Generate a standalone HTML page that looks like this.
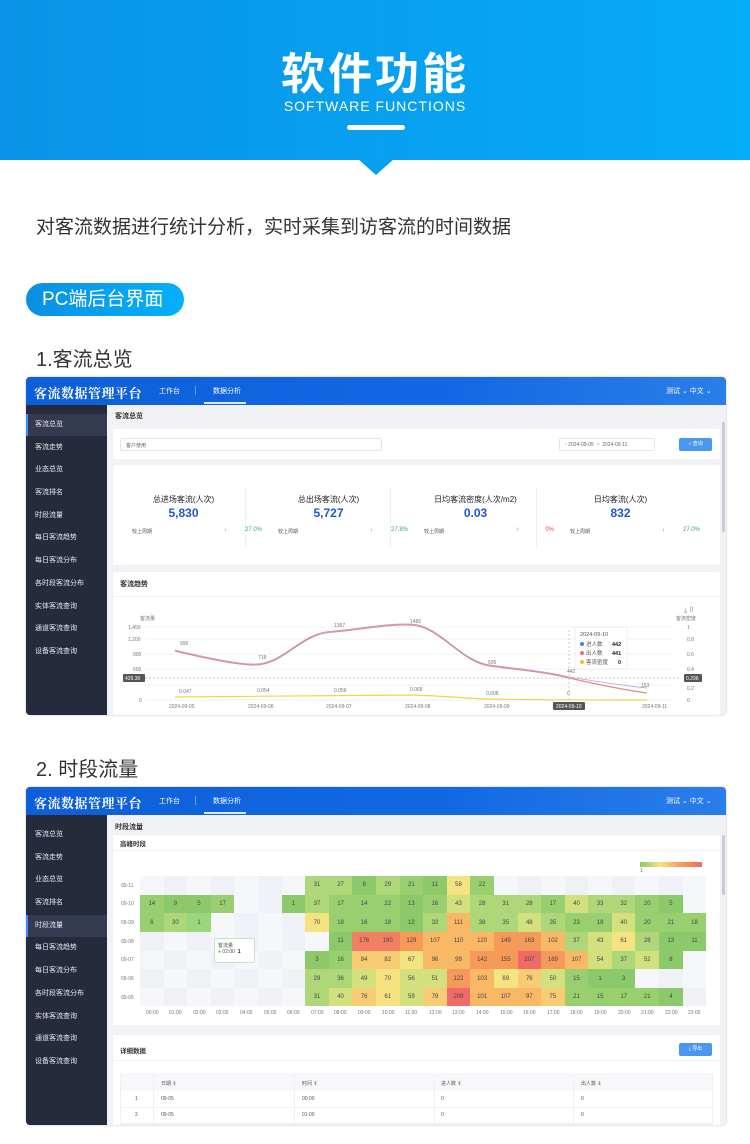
<!DOCTYPE html>
<html><head><meta charset="utf-8">
<style>
*{margin:0;padding:0;box-sizing:border-box}
body{width:750px;height:1144px;position:relative;background:#fff;font-family:"Liberation Sans","Noto Sans CJK SC",sans-serif;overflow:hidden}
.a{position:absolute}
.banner{left:0;top:0;width:750px;height:160px;background:linear-gradient(90deg,#0a93e6,#05acf8)}
.tri{left:358px;top:159px;width:0;height:0;border-left:18px solid transparent;border-right:18px solid transparent;border-top:16px solid #07a0ef}
.shot{border-radius:4px;overflow:hidden;background:#f0f2f5;box-shadow:0 0 2px rgba(0,0,0,.25)}
.hdr{left:0;top:0;width:700px;height:28px;background:linear-gradient(90deg,#0d5fd9,#1268e3 60%,#2a7eea)}
.logo{left:8px;top:6px;color:#fff;font:bold 13px "Noto Serif CJK SC",serif;letter-spacing:0.5px}
.nav{top:9px;color:#fff;font-size:7px}
.side{left:0;top:28px;width:81px;background:#252b3d}
.si{position:absolute;left:0;width:81px;height:22px;color:#e8eaf0;font-size:7px;line-height:22px;padding-left:9px}
.si.on{background:#343b50;border-left:2px solid #3d8bff;padding-left:7px}
.card{background:#fff;border-radius:2px}
.t7{font-size:7px;color:#333}
.cmp{font-size:5px;color:#555;top:151px}
.pct{font-size:6px;top:150px;width:40px;text-align:right}
.arr{font-size:6px;top:150px}
table.hm{border-collapse:collapse;table-layout:fixed;width:566.4px}
table.hm td{width:23.6px;height:18.65px;font-size:6px;color:#444;text-align:center;padding:0}
.e{background:#f6f7fb}.e2{background:#eff1f7}
.g0{background:#8cc96a}.g1{background:#9acf70}.g2{background:#aed779}.y1{background:#d3e07e}.y2{background:#f4e380}.y3{background:#f8cc74}.o1{background:#f8b866}.o2{background:#f69a59}.r1{background:#f27f62}.r2{background:#ef6b68}
</style></head><body>
<div class="a banner"></div>
<div class="a tri"></div>
<div class="a" style="left:0;top:38px;width:750px;text-align:center;color:#fff;font:bold 44px 'Noto Sans CJK SC',sans-serif;letter-spacing:3px">软件功能</div>
<div class="a" style="left:0;top:98px;width:750px;text-align:center;color:#fff;font-size:14px;letter-spacing:1px">SOFTWARE FUNCTIONS</div>
<div class="a" style="left:347px;top:125px;width:58px;height:5px;background:#fff;border-radius:3px"></div>

<div class="a" style="left:36px;top:212px;font-size:19px;color:#333">对客流数据进行统计分析，实时采集到访客流的时间数据</div>
<div class="a" style="left:26px;top:283px;width:158px;height:33px;border-radius:17px;background:linear-gradient(90deg,#0b8fe4,#05b0fb);color:#fff;font-size:19px;line-height:33px;padding-left:16px">PC端后台界面</div>
<div class="a" style="left:36px;top:343px;font-size:20px;color:#333">1.客流总览</div>
<div class="a" style="left:36px;top:753px;font-size:20px;color:#333">2. 时段流量</div>

<!-- SHOT 1 -->
<div class="a shot" style="left:26px;top:377px;width:700px;height:338px">
 <div class="a hdr"></div>
 <div class="a logo">客流数据管理平台</div>
 <div class="a nav" style="left:133px">工作台</div>
 <div class="a" style="left:169px;top:9px;width:1px;height:9px;background:#6c9ce8"></div>
 <div class="a nav" style="left:187px">数据分析</div>
 <div class="a" style="left:178px;top:25px;width:42px;height:2px;background:#dbe7ff"></div>
 <div class="a nav" style="left:640px">测试 ⌄ 中文 ⌄</div>
 <div class="a side" style="height:310px">
  <div class="si on" style="top:9px">客流总览</div>
  <div class="si" style="top:32px">客流走势</div>
  <div class="si" style="top:54px">业态总览</div>
  <div class="si" style="top:77px">客流排名</div>
  <div class="si" style="top:100px">时段流量</div>
  <div class="si" style="top:122px">每日客流趋势</div>
  <div class="si" style="top:145px">每日客流分布</div>
  <div class="si" style="top:168px">各时段客流分布</div>
  <div class="si" style="top:191px">实体客流查询</div>
  <div class="si" style="top:213px">通道客流查询</div>
  <div class="si" style="top:236px">设备客流查询</div>
 </div>
 <div class="a t7" style="left:89px;top:34px;font-weight:bold">客流总览</div>
 <div class="a card" style="left:87px;top:52px;width:607px;height:30px"></div>
 <div class="a" style="left:94px;top:61px;width:262px;height:13px;border:1px solid #e3e5ea;border-radius:2px;font-size:5px;color:#666;padding:3px 5px">客户使用</div>
 <div class="a" style="left:533px;top:61px;width:96px;height:13px;border:1px solid #e3e5ea;border-radius:2px;font-size:5px;color:#666;padding:3px 5px">▫ 2024-09-05 &nbsp;~&nbsp; 2024-09-11</div>
 <div class="a" style="left:653px;top:61px;width:33px;height:13px;background:#4a97f0;border-radius:2px;font-size:5px;color:#fff;text-align:center;line-height:13px">○ 查询</div>
 <div class="a card" style="left:87px;top:88px;width:607px;height:100px"></div>
 <div class="a" style="left:219px;top:110px;width:1px;height:60px;background:#eee"></div>
 <div class="a" style="left:364px;top:110px;width:1px;height:60px;background:#eee"></div>
 <div class="a" style="left:510px;top:110px;width:1px;height:60px;background:#eee"></div>
 <div class="a" style="left:100px;top:117px;width:115px;text-align:center;font-size:8px;color:#222">总进场客流(人次)<br><b style="font-size:12px;color:#1f55d8;line-height:17px">5,830</b></div>
 <div class="a" style="left:245px;top:117px;width:115px;text-align:center;font-size:8px;color:#222">总出场客流(人次)<br><b style="font-size:12px;color:#1f55d8;line-height:17px">5,727</b></div>
 <div class="a" style="left:392px;top:117px;width:115px;text-align:center;font-size:8px;color:#222">日均客流密度(人次/m2)<br><b style="font-size:12px;color:#1f55d8;line-height:17px">0.03</b></div>
 <div class="a" style="left:537px;top:117px;width:115px;text-align:center;font-size:8px;color:#222">日均客流(人次)<br><b style="font-size:12px;color:#1f55d8;line-height:17px">832</b></div>
 <div class="a cmp" style="left:106px">较上周期</div><div class="a arr" style="left:198px;color:#3aa76d">↓</div><div class="a pct" style="left:196px;color:#3aa76d">27.0%</div>
 <div class="a cmp" style="left:252px">较上周期</div><div class="a arr" style="left:344px;color:#3aa76d">↓</div><div class="a pct" style="left:342px;color:#3aa76d">27.8%</div>
 <div class="a cmp" style="left:398px">较上周期</div><div class="a arr" style="left:490px;color:#e04545">↑</div><div class="a pct" style="left:488px;color:#e04545">0%</div>
 <div class="a cmp" style="left:544px">较上周期</div><div class="a arr" style="left:636px;color:#3aa76d">↓</div><div class="a pct" style="left:634px;color:#3aa76d">27.0%</div>
 <div class="a card" style="left:87px;top:195px;width:607px;height:143px"></div>
 <div class="a t7" style="left:94px;top:202px;font-weight:bold">客流趋势</div>
 <div class="a" style="left:87px;top:219px;width:607px;height:1px;background:#f0f1f4"></div>
 <div class="a" style="left:696px;top:45px;width:3px;height:110px;background:#c9ccd3;border-radius:2px"></div>
</div>
<svg class="a" style="left:0;top:0" width="750" height="1144">
 <g stroke="#eef0f5" stroke-width="1">
  <line x1="145" y1="627" x2="672" y2="627"/><line x1="145" y1="639" x2="672" y2="639"/><line x1="145" y1="654" x2="672" y2="654"/><line x1="145" y1="669" x2="672" y2="669"/><line x1="145" y1="685" x2="672" y2="685"/><line x1="145" y1="700" x2="672" y2="700"/>
 </g>
 <line x1="145" y1="678" x2="680" y2="678" stroke="#888" stroke-dasharray="2,2" stroke-width=".6"/>
 <line x1="569" y1="630" x2="569" y2="700" stroke="#aaa" stroke-dasharray="2,2" stroke-width=".6"/>
 <g font-size="5" fill="#777" font-family="Liberation Sans">
  <text x="140" y="620">客流量</text><text x="676" y="620">客流密度</text>
  <text x="128" y="629">1,450</text><text x="128" y="641">1,200</text><text x="133" y="656">900</text><text x="133" y="671">600</text><text x="139" y="702">0</text>
  <text x="687" y="629">1</text><text x="687" y="641">0.8</text><text x="687" y="656">0.6</text><text x="687" y="671">0.4</text><text x="687" y="690">0.2</text><text x="687" y="702">0</text>
  <text x="169" y="708">2024-09-05</text><text x="248" y="708">2024-09-06</text><text x="326" y="708">2024-09-07</text><text x="405" y="708">2024-09-08</text><text x="484" y="708">2024-09-09</text><text x="642" y="708">2024-09-11</text>
  <text x="180" y="645">995</text><text x="258" y="659">718</text><text x="334" y="627">1367</text><text x="410" y="623">1486</text><text x="488" y="664">695</text><text x="567" y="673">442</text><text x="641" y="687">153</text>
  <text x="179" y="693">0.047</text><text x="257" y="692">0.054</text><text x="334" y="692">0.056</text><text x="410" y="691">0.068</text><text x="486" y="695">0.008</text><text x="567" y="695">0</text>
 </g>
 <rect x="553" y="702" width="32" height="8" fill="#555" rx="1"/><text x="556" y="708" font-size="5" fill="#fff">2024-09-10</text>
 <rect x="123" y="674" width="22" height="8" fill="#555" rx="1"/><text x="125" y="680" font-size="5" fill="#fff">429.30</text>
 <rect x="684" y="674" width="18" height="8" fill="#555" rx="1"/><text x="686" y="680" font-size="5" fill="#fff">0.296</text>
 <path d="M175,651 C200,657 235,665 254,665 C285,665 300,633 333,632 C360,630 385,624 411,625 C440,626 460,662 490,666 C520,670 545,672 569,678 C600,685 625,690 647,693" fill="none" stroke="#e88a8a" stroke-width="1.3"/>
 <path d="M175,650 C200,656 235,664 254,664 C285,664 300,632 333,631 C360,629 385,623 411,624 C440,625 460,661 490,665 C520,669 545,671 569,677 C600,682 625,686 647,688" fill="none" stroke="#8a7fd6" stroke-width=".8" opacity=".7"/>
 <path d="M175,697 C250,696 330,696 411,695 C450,696 470,699 490,699 C540,700 600,700 647,700" fill="none" stroke="#f2d34a" stroke-width="1.2"/>
 <rect x="575" y="627" width="52" height="42" fill="#fff" stroke="#e5e5e5" stroke-width=".6" rx="2"/>
 <g font-size="5.5" fill="#555"><text x="580" y="636">2024-09-10</text>
 <circle cx="582" cy="644" r="2" fill="#3e7ff0"/><text x="586" y="646">进人数</text><text x="612" y="646" font-weight="bold" fill="#222">442</text>
 <circle cx="582" cy="653" r="2" fill="#ec6b6b"/><text x="586" y="655">出人数</text><text x="612" y="655" font-weight="bold" fill="#222">441</text>
 <circle cx="582" cy="662" r="2" fill="#f6bf26"/><text x="586" y="664">客流密度</text><text x="618" y="664" font-weight="bold" fill="#222">0</text></g>
 <text x="684" y="612" font-size="7" fill="#888">⤓ ▯</text>
</svg>

<!-- SHOT 2 -->
<div class="a shot" style="left:26px;top:787px;width:700px;height:338px">
 <div class="a hdr"></div>
 <div class="a logo">客流数据管理平台</div>
 <div class="a nav" style="left:133px">工作台</div>
 <div class="a" style="left:169px;top:9px;width:1px;height:9px;background:#6c9ce8"></div>
 <div class="a nav" style="left:187px">数据分析</div>
 <div class="a" style="left:178px;top:25px;width:42px;height:2px;background:#dbe7ff"></div>
 <div class="a nav" style="left:640px">测试 ⌄ 中文 ⌄</div>
 <div class="a side" style="height:310px">
  <div class="si" style="top:9px">客流总览</div>
  <div class="si" style="top:32px">客流走势</div>
  <div class="si" style="top:54px">业态总览</div>
  <div class="si" style="top:77px">客流排名</div>
  <div class="si on" style="top:100px">时段流量</div>
  <div class="si" style="top:122px">每日客流趋势</div>
  <div class="si" style="top:145px">每日客流分布</div>
  <div class="si" style="top:168px">各时段客流分布</div>
  <div class="si" style="top:191px">实体客流查询</div>
  <div class="si" style="top:213px">通道客流查询</div>
  <div class="si" style="top:236px">设备客流查询</div>
 </div>
 <div class="a t7" style="left:89px;top:35px;font-weight:bold">时段流量</div>
 <div class="a card" style="left:87px;top:48px;width:607px;height:190px"></div>
 <div class="a t7" style="left:94px;top:51px;font-weight:bold;font-size:6.5px">高峰时段</div>
 <div class="a" style="left:87px;top:63px;width:607px;height:1px;background:#f0f1f4"></div>
 <div class="a" style="left:614px;top:75px;width:62px;height:5px;background:linear-gradient(90deg,#8cc96a,#f4e380,#f69a59,#ef6b68)"></div>
 <div class="a" style="left:614px;top:81px;font-size:5px;color:#666">1</div>
 <div class="a card" style="left:87px;top:248px;width:607px;height:90px"></div>
 <div class="a t7" style="left:94px;top:258px;font-weight:bold;font-size:6.5px">详细数据</div>
 <div class="a" style="left:87px;top:273px;width:607px;height:1px;background:#f0f1f4"></div>
 <div class="a" style="left:653px;top:256px;width:33px;height:13px;background:#4a97f0;border-radius:2px;font-size:5px;color:#fff;text-align:center;line-height:13px">⤓ 导出</div>
 <div class="a" style="left:94px;top:287px;width:593px;height:51px;border:1px solid #eef0f3">
  <div class="a" style="left:0;top:0;width:591px;height:16px;background:#f7f8fa"></div>
  <div class="a" style="left:32px;top:0;width:1px;height:51px;background:#eef0f3"></div>
  <div class="a" style="left:173px;top:0;width:1px;height:51px;background:#eef0f3"></div>
  <div class="a" style="left:313px;top:0;width:1px;height:51px;background:#eef0f3"></div>
  <div class="a" style="left:452px;top:0;width:1px;height:51px;background:#eef0f3"></div>
  <div class="a" style="left:0;top:32px;width:591px;height:1px;background:#eef0f3"></div>
  <div class="a" style="left:0;top:48px;width:591px;height:1px;background:#eef0f3"></div>
  <div class="a" style="left:40px;top:5px;font-size:5px;color:#555">日期 ⇕</div>
  <div class="a" style="left:181px;top:5px;font-size:5px;color:#555">时间 ⇕</div>
  <div class="a" style="left:320px;top:5px;font-size:5px;color:#555">进人数 ⇕</div>
  <div class="a" style="left:460px;top:5px;font-size:5px;color:#555">出人数 ⇕</div>
  <div class="a" style="left:14px;top:21px;font-size:5px;color:#555">1</div><div class="a" style="left:40px;top:21px;font-size:5px;color:#555">09-05</div><div class="a" style="left:181px;top:21px;font-size:5px;color:#555">00:00</div><div class="a" style="left:320px;top:21px;font-size:5px;color:#555">0</div><div class="a" style="left:460px;top:21px;font-size:5px;color:#555">0</div>
  <div class="a" style="left:14px;top:37px;font-size:5px;color:#555">2</div><div class="a" style="left:40px;top:37px;font-size:5px;color:#555">09-05</div><div class="a" style="left:181px;top:37px;font-size:5px;color:#555">01:00</div><div class="a" style="left:320px;top:37px;font-size:5px;color:#555">0</div><div class="a" style="left:460px;top:37px;font-size:5px;color:#555">0</div>
 </div>
 <div class="a" style="left:696px;top:48px;width:3px;height:60px;background:#c9ccd3;border-radius:2px"></div>
</div>
<div class="a" style="left:140px;top:876px">
<table class="hm">
<tr><td class="e"></td><td class="e2"></td><td class="e"></td><td class="e2"></td><td class="e"></td><td class="e2"></td><td class="e"></td><td class="g2">31</td><td class="g2">27</td><td class="g0">8</td><td class="g2">29</td><td class="g1">21</td><td class="g0">11</td><td class="y2">58</td><td class="g1">22</td><td class="e"></td><td class="e2"></td><td class="e"></td><td class="e2"></td><td class="e"></td><td class="e2"></td><td class="e"></td><td class="e2"></td><td class="e"></td></tr>
<tr><td class="g1">14</td><td class="g0">9</td><td class="g0">5</td><td class="g1">17</td><td class="e"></td><td class="e2"></td><td class="g0">1</td><td class="g2">37</td><td class="g1">17</td><td class="g1">14</td><td class="g1">22</td><td class="g0">13</td><td class="g1">16</td><td class="y1">43</td><td class="g2">28</td><td class="g2">31</td><td class="g2">28</td><td class="g1">17</td><td class="y1">40</td><td class="g2">33</td><td class="g2">32</td><td class="g1">20</td><td class="g0">5</td><td class="e"></td></tr>
<tr><td class="g1">6</td><td class="g2">30</td><td style="background:#9ad77c">1</td><td class="e"></td><td class="e2"></td><td class="e"></td><td class="e2"></td><td class="y2">70</td><td class="g1">18</td><td class="g1">16</td><td class="g1">18</td><td class="g0">12</td><td class="g2">33</td><td class="o1">111</td><td class="g2">38</td><td class="g2">35</td><td class="y1">48</td><td class="g2">35</td><td class="g1">23</td><td class="g1">18</td><td class="y1">40</td><td class="g1">20</td><td class="g1">21</td><td class="g1">18</td></tr>
<tr><td class="e2"></td><td class="e"></td><td class="e2"></td><td class="e"></td><td class="e2"></td><td class="e"></td><td class="e2"></td><td class="e"></td><td class="g0">11</td><td class="r1">176</td><td class="r1">190</td><td class="o2">129</td><td class="o1">107</td><td class="o1">110</td><td class="o1">120</td><td class="o2">149</td><td class="o2">163</td><td class="o1">102</td><td class="g2">37</td><td class="y1">43</td><td class="y2">61</td><td class="g2">28</td><td class="g0">13</td><td class="g0">11</td></tr>
<tr><td class="e"></td><td class="e2"></td><td class="e"></td><td class="e2"></td><td class="e"></td><td class="e2"></td><td class="e"></td><td class="g0">3</td><td class="g1">16</td><td class="y3">84</td><td class="y3">82</td><td class="y2">67</td><td class="o1">96</td><td class="o1">99</td><td class="o2">142</td><td class="o2">155</td><td class="r2">207</td><td class="o2">169</td><td class="o1">107</td><td class="y1">54</td><td class="g2">37</td><td class="y1">52</td><td class="g0">8</td><td class="e"></td></tr>
<tr><td class="e2"></td><td class="e"></td><td class="e2"></td><td class="e"></td><td class="e2"></td><td class="e"></td><td class="e2"></td><td class="g2">29</td><td class="g2">36</td><td class="y1">49</td><td class="y2">70</td><td class="y1">56</td><td class="y1">51</td><td class="o2">122</td><td class="o1">103</td><td class="y2">69</td><td class="y3">76</td><td class="y1">50</td><td class="g1">15</td><td class="g0">1</td><td class="g0">3</td><td class="e"></td><td class="e2"></td><td class="e"></td></tr>
<tr><td class="e"></td><td class="e2"></td><td class="e"></td><td class="e2"></td><td class="e"></td><td class="e2"></td><td class="e"></td><td class="g2">31</td><td class="y1">40</td><td class="y3">76</td><td class="y2">61</td><td class="y1">59</td><td class="y3">79</td><td class="r2">209</td><td class="o1">101</td><td class="o1">107</td><td class="o1">97</td><td class="y3">75</td><td class="g1">21</td><td class="g1">15</td><td class="g1">17</td><td class="g1">21</td><td class="g0">4</td><td class="e2"></td></tr>
</table></div>
<div class="a" style="left:214px;top:938px;width:41px;height:25px;background:#fff;border:1px solid #c9e3c0;border-radius:2px;font-size:5px;color:#555;padding:3px">客流量<br><span style="color:#6bbf57">●</span> 02:00 &nbsp;<b style="color:#222">1</b></div>
<svg class="a" style="left:0;top:0;pointer-events:none" width="750" height="1144">
 <g font-size="5" fill="#777" font-family="Liberation Sans">
  <text x="121" y="887">09-11</text><text x="121" y="905">09-10</text><text x="121" y="924">09-09</text><text x="121" y="943">09-08</text><text x="121" y="961">09-07</text><text x="121" y="980">09-06</text><text x="121" y="999">09-05</text>
  <text x="146" y="1014">00:00</text><text x="169" y="1014">01:00</text><text x="193" y="1014">02:00</text><text x="216" y="1014">03:00</text><text x="240" y="1014">04:00</text><text x="264" y="1014">05:00</text><text x="287" y="1014">06:00</text><text x="311" y="1014">07:00</text><text x="334" y="1014">08:00</text><text x="358" y="1014">09:00</text><text x="382" y="1014">10:00</text><text x="405" y="1014">11:00</text><text x="429" y="1014">12:00</text><text x="452" y="1014">13:00</text><text x="476" y="1014">14:00</text><text x="500" y="1014">15:00</text><text x="523" y="1014">16:00</text><text x="547" y="1014">17:00</text><text x="570" y="1014">18:00</text><text x="594" y="1014">19:00</text><text x="618" y="1014">20:00</text><text x="641" y="1014">21:00</text><text x="665" y="1014">22:00</text><text x="688" y="1014">23:00</text>
 </g>
</svg>
</body></html>
